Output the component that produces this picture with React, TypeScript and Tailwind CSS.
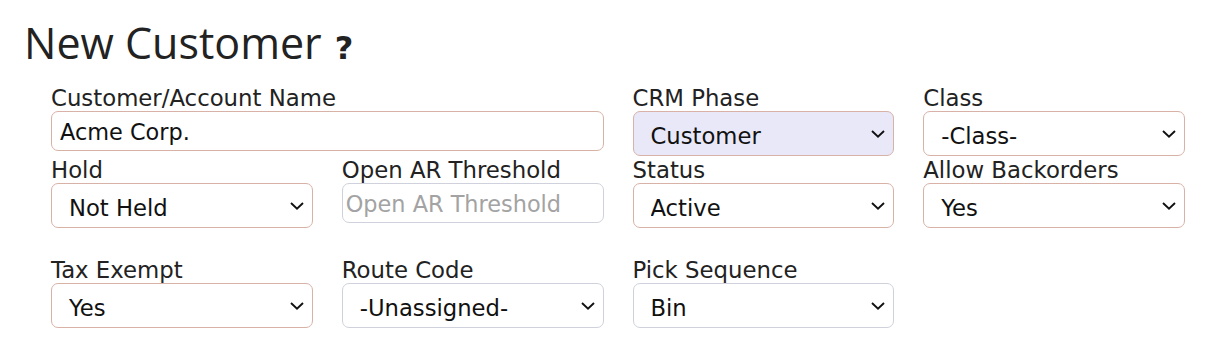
import React from 'react';

const ff = { fontFamily: '"DejaVu Sans", sans-serif' };

const Chevron: React.FC = () => (
    <svg className="pointer-events-none absolute right-[9px] top-1/2 -translate-y-1/2" width="14" height="9" viewBox="0 0 14 9" fill="none">
        <path d="M1 1.5 L7 7.2 L13 1.5" stroke="#111" strokeWidth="1.9" />
    </svg>
);

const Label: React.FC<{ text: string }> = ({ text }) => (
    <label className="block h-[25px] whitespace-nowrap text-[22.8px] leading-[25px] text-[#222]">{text}</label>
);

const SelectField: React.FC<{ label: string; value: string; required?: boolean; shaded?: boolean }> = ({ label, value, required = true, shaded }) => (
    <div className="flex flex-col">
        <Label text={label} />
        <div className="relative">
            <select
                defaultValue={value}
                className={`h-[45px] w-full appearance-none rounded-[7px] border pl-[17px] pr-10 pt-[5px] text-[22.7px] text-[#111] outline-none ${required ? 'border-[#d9b2a7]' : 'border-[#cfd2dc]'} ${shaded ? 'bg-[#e8e8f8]' : 'bg-white'}`}
                style={ff}
            >
                <option>{value}</option>
            </select>
            <Chevron />
        </div>
    </div>
);

const TextField: React.FC<{ label: string; value?: string; placeholder?: string; required?: boolean; span?: boolean }> = ({ label, value, placeholder, required = true, span }) => (
    <div className={`flex flex-col ${span ? 'col-span-2' : ''}`}>
        <Label text={label} />
        <input
            defaultValue={value}
            placeholder={placeholder}
            className={`h-[40px] w-full rounded-[7px] border bg-white pt-[2px] text-[22.4px] text-[#111] outline-none placeholder:text-[#a3a3a3] ${value ? 'px-[8px]' : 'px-[3px]'} ${required ? 'border-[#d9b2a7]' : 'border-[#cfd2dc]'}`}
            style={ff}
        />
    </div>
);

export default function App() {
    return (
        <div className="min-h-[351px] w-[1207px] bg-white pl-[24px] pt-[14px]" style={ff}>
            <h1 className="flex items-baseline text-[43px] leading-[58px] text-[#222]" style={{ fontFamily: '"Open Sans", sans-serif' }}>
                New Customer
                <span className="ml-[13px] text-[32px] font-bold" style={ff}>?</span>
            </h1>
            <div className="ml-[27px] mt-[9px] w-[1134px]">
                <div className="grid grid-cols-4 items-start gap-x-[29px]">
                    <TextField label="Customer/Account Name" value="Acme Corp." span />
                    <SelectField label="CRM Phase" value="Customer" shaded />
                    <SelectField label="Class" value="-Class-" />
                </div>
                <div className="mt-[2px] grid grid-cols-4 items-start gap-x-[29px]">
                    <SelectField label="Hold" value="Not Held" />
                    <TextField label="Open AR Threshold" placeholder="Open AR Threshold" required={false} />
                    <SelectField label="Status" value="Active" />
                    <SelectField label="Allow Backorders" value="Yes" />
                </div>
                <div className="mt-[30px] grid grid-cols-4 items-start gap-x-[29px]">
                    <SelectField label="Tax Exempt" value="Yes" />
                    <SelectField label="Route Code" value="-Unassigned-" required={false} />
                    <SelectField label="Pick Sequence" value="Bin" required={false} />
                </div>
            </div>
        </div>
    );
}
